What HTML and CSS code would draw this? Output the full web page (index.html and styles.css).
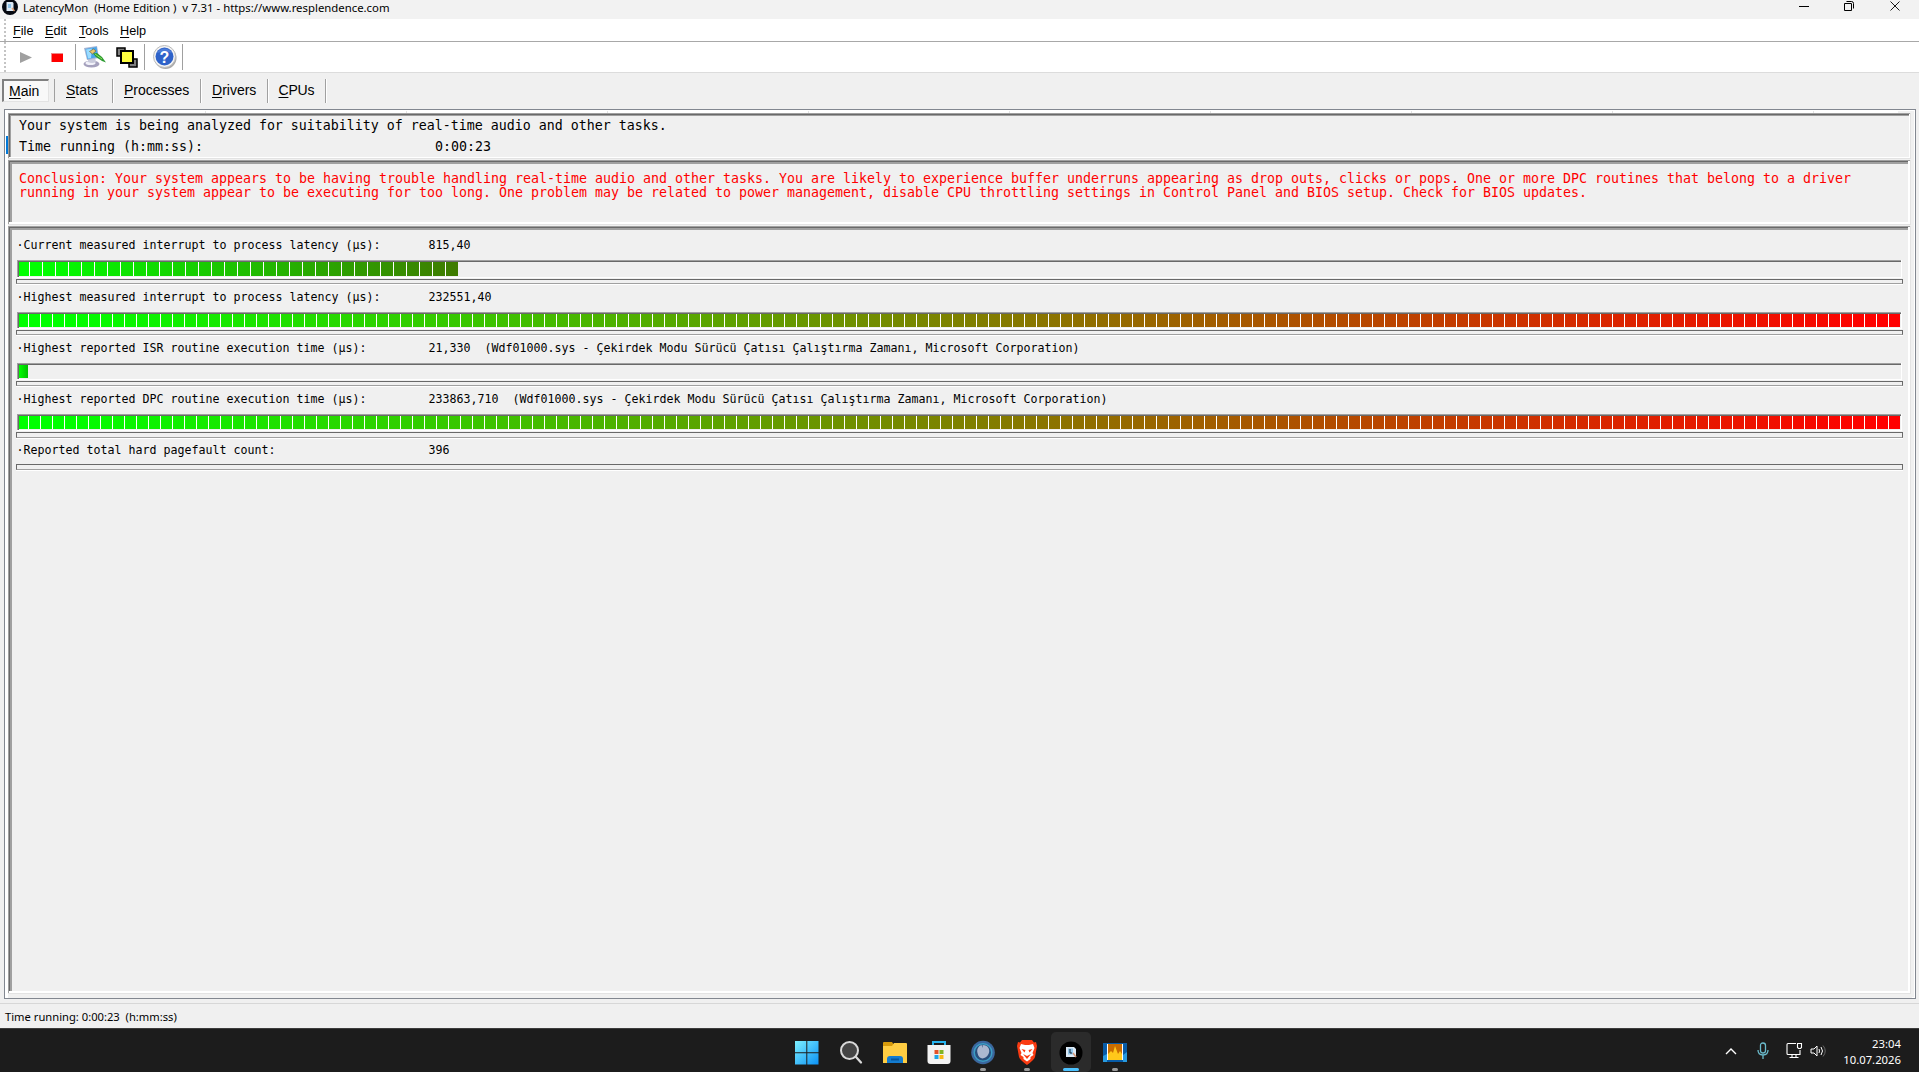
FILE: index.html
```html
<!DOCTYPE html>
<html lang="en"><head><meta charset="utf-8"><title>LatencyMon</title><link rel="stylesheet" href="styles.css"></head>
<body>
<header class="title">
<svg class="appicon" viewBox="0 0 16 16"><circle cx="8" cy="8" r="8" fill="#050810"/><path d="M4.500 3h6l1 1v8h-7z" fill="#dce9f5"/><path d="M6 5h3v4H6z" fill="#8fc3e8"/><path d="M10 9l2.500 3" stroke="#e6a070" stroke-width="1.300"/></svg>
<span class="caption">LatencyMon&nbsp; (Home Edition )&nbsp; v 7.31 - https://www.resplendence.com</span>
<div class="wincontrols"><svg viewBox="0 0 10 12"><path d="M0 6.500h10" stroke="#000"/></svg><svg viewBox="0 0 10 12"><path d="M.5 3.500h7v7h-7zM2.500 1.500h5q2 0 2 2v5" fill="none" stroke="#000"/></svg><svg viewBox="0 0 10 12"><path d="M.5 1.500l9 9M9.500 1.500l-9 9" stroke="#000" stroke-width=".9"/></svg></div>
</header>
<nav class="menu"><i class="grip"></i><span class="file"><u>F</u>ile</span><span class="edit"><u>E</u>dit</span><span class="tool"><u>T</u>ools</span><span><u>H</u>elp</span></nav>
<div class="tools"><i class="grip"></i>
<svg class="play" viewBox="0 0 12 11"><path d="M0 0l12 5.500L0 11z" fill="#a0a0a0"/></svg>
<i class="stop"></i><i class="sep s1"></i>
<svg class="monitor" viewBox="0 0 24 24"><ellipse cx="8.500" cy="19" rx="8" ry="3.500" fill="#a5a1bd"/><ellipse cx="7.500" cy="18" rx="5" ry="2" fill="#f2f2fa"/><path d="M5 13l7-1 1 5q-4 2-8 0z" fill="#c9cbdc"/><path d="M1 3l13-2 2 12-12 2z" fill="#a5b4d2"/><path d="M2.500 4l11-2 1.500 10-10.500 2z" fill="#45a5ec"/><path d="M3 4.500l6-1-1 9.500-3 .5z" fill="#9bdcff"/><path d="M6.500 6.500l4-2.500 2.500 2-3.500 3z" fill="#e9c66c" stroke="#735a26" stroke-width=".6"/><path d="M10 8.500l4-.5 5 4 4 5.500-4-1.500-6-4z" fill="#2c9b30"/><path d="M12 9l7 5" stroke="#90e060"/></svg>
<svg class="layers" viewBox="0 0 22 21"><path d="M1 1h8v8H1zM13 12h8v8h-8z" fill="#808080" stroke="#000" stroke-width="1.500"/><path d="M5 4h12v12H5z" fill="#ff0" stroke="#000" stroke-width="2"/><path d="M6.500 6h10M6.500 8h10M6.500 10h10M6.500 12h10M6.500 14h10" stroke="#fff" stroke-dasharray="1 1"/></svg>
<i class="sep s2"></i>
<svg class="help" viewBox="0 0 24 24"><circle cx="12.500" cy="13" r="11" fill="#aaa"/><circle cx="11.500" cy="11.500" r="11" fill="#f3f3f3" stroke="#bbb"/><circle cx="11.500" cy="11.500" r="9" fill="#2e62c9"/><path d="M4 8a8.500 8.500 0 0115 0q-7-3-15 0" fill="#4c7cd8"/><text x="11.500" y="17.500" text-anchor="middle">?</text></svg>
<i class="sep s3"></i></div>
<nav class="tabs"><span class="active t1"><u>M</u>ain</span><span class="t2"><u>S</u>tats</span><span class="t3"><u>P</u>rocesses</span><span class="t4"><u>D</u>rivers</span><span class="t5"><u>C</u>PUs</span></nav>
<main class="frame">
<i class="focus"></i>
<section class="panel intro"><p>Your system is being analyzed for suitability of real-time audio and other tasks.</p><p class="run"><span>Time running (h:mm:ss):</span><span>0:00:23</span></p></section>
<section class="panel deep conclusion">Conclusion: Your system appears to be having trouble handling real-time audio and other tasks. You are likely to experience buffer underruns appearing as drop outs, clicks or pops. One or more DPC routines that belong to a driver<br>running in your system appear to be executing for too long. One problem may be related to power management, disable CPU throttling settings in Control Panel and BIOS setup. Check for BIOS updates.</section>
<section class="panel deep stats">
<div class="row first"><span>·Current measured interrupt to process latency (µs):</span><span>815,40</span></div><div class="meter tall"><i class="fill current"></i></div><div class="rule"></div>
<div class="row"><span>·Highest measured interrupt to process latency (µs):</span><span>232551,40</span></div><div class="meter"><i class="fill full"></i></div><div class="rule"></div>
<div class="row"><span>·Highest reported ISR routine execution time (µs):</span><span>21,330&nbsp; (Wdf01000.sys - Çekirdek Modu Sürücü Çatısı Çalıştırma Zamanı, Microsoft Corporation)</span></div><div class="meter"><i class="fill one"></i></div><div class="rule"></div>
<div class="row"><span>·Highest reported DPC routine execution time (µs):</span><span>233863,710&nbsp; (Wdf01000.sys - Çekirdek Modu Sürücü Çatısı Çalıştırma Zamanı, Microsoft Corporation)</span></div><div class="meter"><i class="fill full"></i></div><div class="rule thick"></div>
<div class="row last"><span>·Reported total hard pagefault count:</span><span>396</span></div><div class="rule thick"></div>
</section>
</main>
<footer class="status">Time running: 0:00:23&nbsp; (h:mm:ss)</footer>
<footer class="taskbar">
<div class="apps">
<div class="app"><svg viewBox="0 0 24 24"><defs><linearGradient id="w" x2="1" y2="1"><stop stop-color="#7df0ff"/><stop offset="1" stop-color="#0b91f5"/></linearGradient></defs><path d="M0 0h11.300v11.300H0zM12.300 0h11.200v11.300H12.300zM0 12.300h11.300v11.200H0zM12.300 12.300h11.200v11.200H12.300z" fill="url(#w)"/></svg></div>
<div class="app"><svg viewBox="0 0 24 24"><circle cx="10.500" cy="9.500" r="8.500" fill="#454545" stroke="#d9d9d9" stroke-width="2"/><path d="M17 16l5 5.500" stroke="#d9d9d9" stroke-width="2.300" stroke-linecap="round"/></svg></div>
<div class="app"><svg viewBox="0 0 24 24"><path d="M0 2q0-1 1-1h8l2 3-2 3H0z" fill="#d89b0b"/><path d="M0 5h9l2-3h12q1 0 1 1v19H0z" fill="#ffcd42"/><path d="M4 22v-4q0-3 3-3h10q3 0 3 3v4z" fill="#147cd0"/><path d="M8 18.500h8" stroke="#07569d" stroke-width="2"/></svg></div>
<div class="app"><svg viewBox="0 0 24 24"><path d="M6 6V1h12v5" fill="none" stroke="#27b4ef" stroke-width="2"/><path d="M.5 4h23v16q0 3-3 3h-17q-3 0-3-3z" fill="#f3f3f3"/><path d="M7.500 9h4v4h-4z" fill="#e55228"/><path d="M12.500 9h4v4h-4z" fill="#80b525"/><path d="M7.500 14h4v4h-4z" fill="#20a4e7"/><path d="M12.500 14h4v4h-4z" fill="#f7b815"/></svg></div>
<div class="app running"><svg viewBox="0 0 24 24"><circle cx="12" cy="11.500" r="11.800" fill="#3b679e"/><circle cx="12" cy="11.500" r="8.800" fill="#294f7d" stroke="#3c9dc4" stroke-width="1.500"/><path d="M11.500 4c6 0 8 5 6 9-3 6-10 6-11-1-1-4 1-7 4-8l1.500 3z" fill="#acb8d0"/></svg></div>
<div class="app running"><svg viewBox="0 0 24 24"><path d="M7 -1h10l2 2.500 2-.5 1 4-2 11q-1 3-8 8-7-5-8-8L2 5l1-4 2 .5z" fill="#fa3b12"/><path d="M6 3l4 1h4l4-1 1.500 4-2 5 1 2-3 2v2l-3.500 2.500L8.500 18v-2l-3-2 1-2-2-5z" fill="#fff"/><path d="M6.500 8l4 1-1 2.500zM17.500 8l-4 1 1 2.500zM8 13l4 2 4-2-4 5z" fill="#fa3b12"/></svg></div>
<div class="app running selected"><svg viewBox="0 0 24 24"><circle cx="12" cy="12" r="11.500" fill="#000"/><path d="M7 6h8l2 2v8H7z" fill="#dce9f5"/><path d="M9 7.500h5v6H9z" fill="#8fc3e8"/><path d="M11 8v4h2" fill="none" stroke="#123"/><path d="M14 12l3 4" stroke="#d49778" stroke-width="1.500"/></svg></div>
<div class="app running"><svg viewBox="0 0 24 24"><path d="M0 2h24v19H0z" fill="#075ba7"/><path d="M0 15l4-2v8H0zM20 14l4-3v10h-4z" fill="#279ae0"/><path d="M5 3h14v16H5z" fill="#c96c00"/><path d="M5 13l3-3 2 2 2-7 3 8 2-3 2 3v6H5z" fill="#ffc81a"/><path d="M4.500 3v16M19.500 3v16" stroke="#fff"/></svg></div>
</div>
<div class="tray">
<svg class="up" viewBox="0 0 12 8"><path d="M1 7l5-5 5 5" fill="none" stroke="#fff" stroke-width="1.400"/></svg>
<svg class="mic" viewBox="0 0 12 18"><path d="M6 1q2.500 0 2.500 2.500v5Q8.500 11 6 11T3.500 8.500v-5Q3.500 1 6 1zM1 8q0 5 5 5t5-5M6 13v4" fill="none" stroke="#6bbccd" stroke-width="1.300"/></svg>
<svg class="net" viewBox="0 0 17 17"><path d="M10 1.500H2q-1 0-1 1v9q0 1 1 1h12V8M3.500 15.500h9M6 13v2M10 13v2M11.500 1.500h4v4l-1 1h-2l-1-1z" fill="none" stroke="#fff" stroke-width="1.100"/></svg>
<svg class="vol" viewBox="0 0 17 14"><path d="M1 5h3l3-3v10L4 9H1z" fill="none" stroke="#fff"/><path d="M9 5q1 2 0 4M11 3q3 4 0 8" fill="none" stroke="#fff"/><path d="M13 1.500q4.500 5.500 0 11" fill="none" stroke="#666"/></svg>
<div class="clock">23:04<br>10.07.2026</div></div>
</footer>
</body></html>
```
FILE: styles.css
```css
* { box-sizing: border-box; }
body { margin: 0; width: 1919px; height: 1072px; overflow: hidden; display: flex; flex-direction: column; background: #f0f0f0; color: #000; font-family: "Liberation Sans", sans-serif; }
body > * { flex: none; }
svg { display: block; flex: none; overflow: visible; }
i { display: block; flex: none; }
u { text-underline-offset: 2px; text-decoration-thickness: 1px; }

.title { height: 19px; background: #f2f2f2; display: flex; align-items: flex-start; padding-left: 2px; }
.appicon { width: 16px; height: 16px; margin-top: -1px; }
.caption { margin-left: 5px; font: 11.37px/16px "Noto Sans", sans-serif; white-space: pre; }
.wincontrols { margin-right: 19px; margin-left: auto; display: flex; gap: 35px; }
.wincontrols svg { width: 10px; height: 12px; }
.wincontrols svg:nth-child(2) { margin-right: 1px; }

.grip { width: 2px; align-self: stretch; background: repeating-linear-gradient(#c4c4c4 0 2px, transparent 2px 4px); }
.menu { height: 23px; background: #fff; border-bottom: 1px solid #a8a8a8; padding-left: 4px; display: flex; font-size: 12.7px; line-height: 24px; }
.file { margin-left: 7px; width: 32px; }
.edit { width: 34px; }
.tool { width: 41px; }
.tools { height: 31px; background: #fff; border-bottom: 1px solid #dcdcdc; display: flex; align-items: center; padding-left: 4px; }
.play { width: 12px; height: 11px; margin-left: 14px; }
.stop { width: 12px; height: 9px; background: #f00; margin-left: 19px; border: solid #e88; border-width: 1px 0 0 1px; }
.sep { width: 1px; height: 26px; background: #a0a0a0; }
.s1 { margin-left: 12px; }
.monitor { width: 24px; height: 24px; margin-left: 7px; }
.layers { width: 22px; height: 21px; margin-left: 9px; }
.s2 { margin-left: 6px; }
.help { width: 24px; height: 24px; margin-left: 8px; }
.help text { font: bold 16px "Liberation Sans", sans-serif; fill: #fff; }
.s3 { margin-left: 5px; }

.tabs { height: 36px; display: flex; align-items: flex-start; padding: 6px 0 0 2px; font-size: 14px; line-height: 23px; }
.tabs span { height: 24px; border-right: 1px solid #a0a0a0; box-shadow: 1px 0 #fff; }
.tabs .active { width: 47px; height: 23px; margin-right: 5px; border: solid; border-width: 2px 1px 1px 2px; border-color: #808080 #e3e3e3 #e3e3e3 #808080; background: #f8f8f8; padding-left: 5px; line-height: 21px; box-shadow: 5px 0 #f0f0f0, 6px 0 #a0a0a0; }
.t2 { width: 58px; padding-left: 11px; margin-left: 1px; }
.t3 { width: 88px; padding-left: 11px; }
.t4 { width: 67px; padding-left: 11px; }
.t5 { width: 58px; padding-left: 10.500px; letter-spacing: -.2px; }

.frame { position: relative; margin: 0 3px 0 4px; height: 890px; border: 1px solid #828790; padding: 3px 4px 3px 3px; background: linear-gradient(#f0f0f0, #f0f0f0) 3px 3px / 1904px 885px no-repeat, linear-gradient(#f0f0f0, #f0f0f0) 1893px 1px / 16px 886px no-repeat, repeating-linear-gradient(90deg, transparent 0 200px, #e3e3e3 200px 201px) 0 1px / 1893px 2px no-repeat, #fff; }
.focus { position: absolute; left: 1px; top: 26px; width: 2px; height: 18px; background: #0078d7; }
.panel { background: #f0f0f0; font-family: "DejaVu Sans Mono", monospace; font-size: 13.295px; box-shadow: inset -1px -1px #e3e3e3, inset 1px 1px #a0a0a0, inset -2px -2px #fff, inset 2px 2px #696969, inset 3px 3px #a0a0a0; }
.panel.deep { box-shadow: inset -1px -1px #e3e3e3, inset 1px 1px #a0a0a0, inset -3px -3px #fff, inset 2px 2px #696969, inset 4px 4px #a0a0a0; }
.panel p { margin: 0; }
.intro { height: 46px; padding: 2px 0 0 11px; line-height: 21px; }
.run { display: flex; }
.run span:first-child { width: 416px; }
.conclusion { height: 65px; margin: 1px 0; color: #f00; line-height: 14px; letter-spacing: .004px; padding: 12px 0 0 11px; white-space: nowrap; }
.panel.stats { height: 768px; padding: 4px 8px 0; font-size: 11.63px; }
.row { height: 28px; line-height: 27px; padding-left: .5px; display: flex; white-space: pre; }
.row.first { height: 30px; line-height: 30px; }
.row.last { height: 26px; line-height: 25px; }
.row span:first-child { width: 412px; }
.meter { height: 17px; margin: 0 1px; padding: 2px 0 0 2px; box-shadow: inset -1px -1px #fff, inset 1px 1px #a0a0a0, inset 2px 2px #696969; }
.meter.tall { height: 18px; }
.rule { height: 5px; margin-top: 1px; border: 1px solid #696969; border-bottom-color: #a0a0a0; box-shadow: 0 1px #fff; }
.rule.thick { height: 6px; }
.row.last + .rule { margin-top: 0; }
.fill { height: 13px; }
.current { width: 439px; height: 14px; background: repeating-linear-gradient(90deg, transparent 0 10px, #fff 10px 11px, transparent 11px 13px), linear-gradient(90deg, #0f0 20px, #3f7b00); }
.full { width: 1881px; background: repeating-linear-gradient(90deg, transparent 0 9px, #fff 9px 10px, transparent 10px 12px), linear-gradient(90deg, #0f0 40px, #f00 1860px); }
.one { width: 9px; background: linear-gradient(90deg, #0f0, #00c000); }

.status { height: 25px; margin-top: 4px; border-top: 1px solid #d7d7d7; padding-left: 5px; font: 11.2px/26px "Noto Sans", sans-serif; }
.taskbar { height: 44px; background: #1c1c1c; border-top: 1px solid #3c3c3c; display: flex; padding-left: 785px; font-family: "Noto Sans", sans-serif; }
.apps { display: flex; }
.app { position: relative; width: 44px; height: 43px; display: flex; justify-content: center; padding-top: 12px; }
.app svg { width: 24px; height: 24px; }
.selected { margin: 3px 2px 0; width: 40px; height: 40px; padding-top: 9px; background: #2b2b2b; border-radius: 5px; }
.running::after { content: ""; position: absolute; bottom: 1px; left: 50%; width: 6px; height: 3px; margin-left: -3px; border-radius: 2px; background: #9a9a9a; }
.selected::after { width: 16px; margin-left: -8px; background: #4cc2ff; }
.tray { margin-left: auto; padding-right: 18px; display: flex; align-items: center; }
.up { width: 12px; height: 8px; margin-right: 20px; }
.mic { width: 12px; height: 18px; margin-right: 17px; }
.net { width: 17px; height: 17px; margin-right: 7px; }
.vol { width: 17px; height: 14px; }
.clock { width: 74px; text-align: right; color: #fff; font-size: 11.3px; line-height: 16px; margin-top: 3px; white-space: nowrap; }
```
